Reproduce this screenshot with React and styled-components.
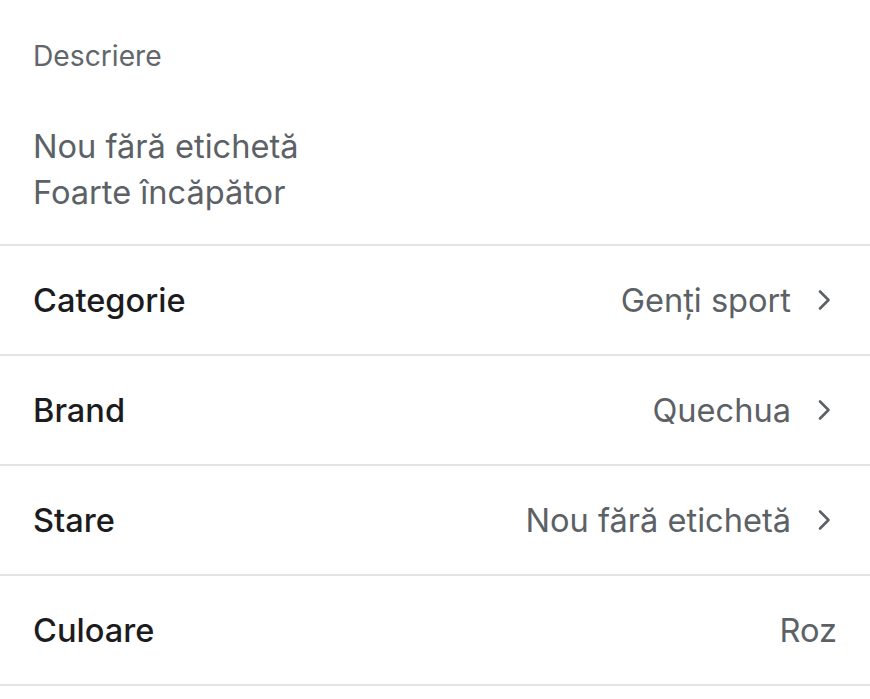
import React from "react";
import styled, { createGlobalStyle } from "styled-components";

const Global = createGlobalStyle`
  html, body { margin: 0; padding: 0; background: #ffffff; }
  body { font-family: Inter, "Noto Sans", sans-serif; -webkit-font-smoothing: antialiased; }
`;

const Page = styled.div`
  width: 870px;
  background: #fff;
`;

const DescSection = styled.section`
  padding: 36px 33px 29px;
  border-bottom: 2px solid #e4e4e4;
`;

const SectionLabel = styled.div`
  font-size: 28.2px;
  line-height: 40px;
  color: #61666b;
`;

const DescText = styled.div`
  margin-top: 47px;
  font-size: 32.6px;
  line-height: 46px;
  color: #5c6166;
`;

const Row = styled.div`
  display: flex;
  align-items: center;
  justify-content: space-between;
  height: 108px;
  padding: 0 33px;
  border-bottom: 2px solid #e4e4e4;
`;

const Label = styled.span`
  font-size: 32.6px;
  font-weight: 500;
  color: #1c1c1e;
`;

const Value = styled.span`
  display: flex;
  align-items: center;
  gap: 26px;
  font-size: 32.6px;
  color: #5c6166;
  padding-right: ${(p) => (p.$chevron ? "6px" : "0")};
`;

const Chevron = () => (
  <svg width="14" height="22" viewBox="0 0 14 22" fill="none">
    <path d="M3 2.5L11.5 11L3 19.5" stroke="#5c6166" strokeWidth="2.6" strokeLinecap="round" strokeLinejoin="round" />
  </svg>
);

const rows = [
  { label: "Categorie", value: "Genți sport", chevron: true },
  { label: "Brand", value: "Quechua", chevron: true },
  { label: "Stare", value: "Nou fără etichetă", chevron: true },
  { label: "Culoare", value: "Roz", chevron: false },
];

export default function App() {
  return (
    <Page>
      <Global />
      <DescSection>
        <SectionLabel>Descriere</SectionLabel>
        <DescText>
          Nou fără etichetă
          <br />
          Foarte încăpător
        </DescText>
      </DescSection>
      {rows.map((r) => (
        <Row key={r.label}>
          <Label>{r.label}</Label>
          <Value $chevron={r.chevron}>
            {r.value}
            {r.chevron && <Chevron />}
          </Value>
        </Row>
      ))}
    </Page>
  );
}
